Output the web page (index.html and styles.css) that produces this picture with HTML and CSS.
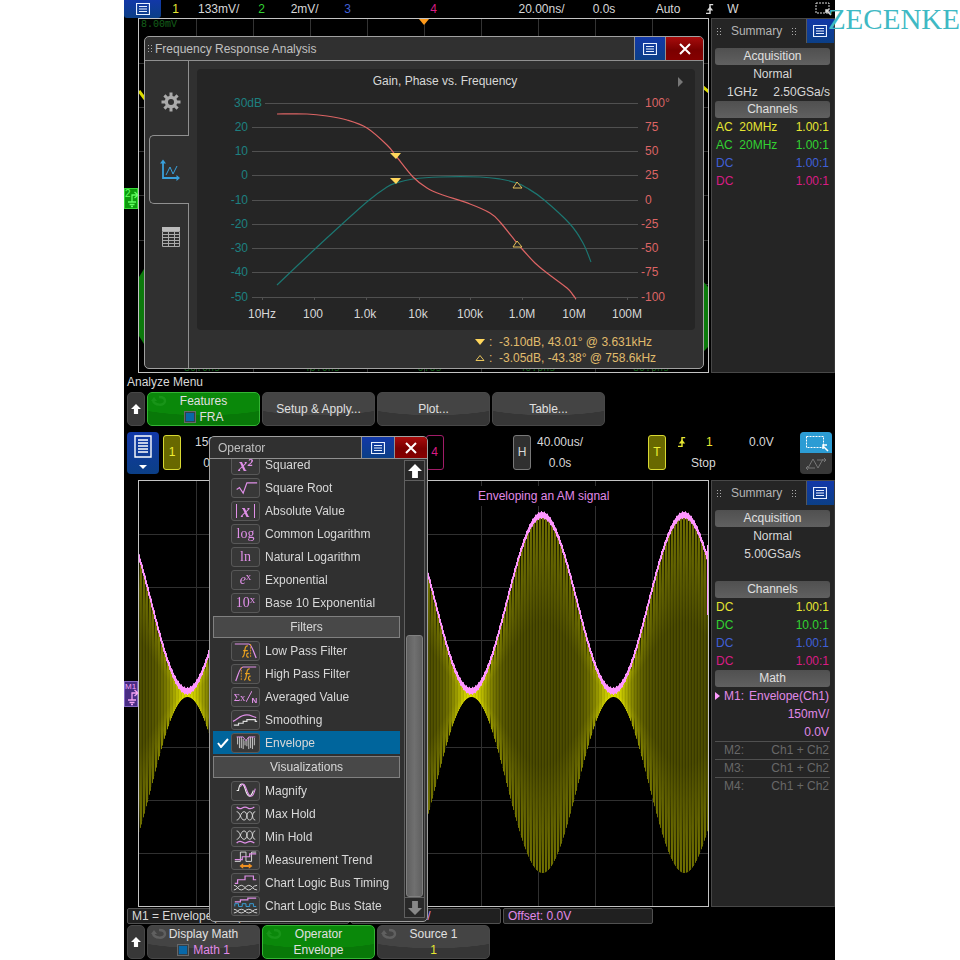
FILE: index.html
```html
<!DOCTYPE html>
<html lang="en">
<head>
<meta charset="utf-8">
<title>Oscilloscope</title>
<link rel="stylesheet" href="styles.css">
</head>
<body>
<svg class="defs" aria-hidden="true">
  <symbol id="i-list" viewBox="0 0 14 12"><path d="M.5.5h13v11H.5zM3 3.500h8M3 6h8M3 8.500h8" fill="none" stroke="currentColor" stroke-width="1.200"/></symbol>
  <symbol id="i-x" viewBox="0 0 12 12"><path d="M1 1l10 10M11 1L1 11" stroke="#fff" stroke-width="2"/></symbol>
  <symbol id="i-up" viewBox="0 0 12 12"><path d="M6 0l6 6H8.500v6h-5V6H0z" fill="currentColor"/></symbol>
  <symbol id="i-edge" viewBox="0 0 10 14"><path d="M0 12.500h5V1.500h4" fill="none" stroke="currentColor" stroke-width="1.800"/><path d="M1 9L5 4l4 5z" fill="currentColor"/></symbol>
  <symbol id="i-turn" viewBox="0 0 16 12"><path d="M2 5c1 6 12 6 12 1 0-3-3-4-6-4" fill="none" stroke="currentColor" stroke-width="2.500"/><path d="M0 6l3-4 3 4z" fill="currentColor"/></symbol>
  <symbol id="i-ground" viewBox="0 0 14 20"><path d="M7 14V7h5M9.500 4L13 7l-3.500 3M3 14h8M4.500 16.500h5M6 18.500h2" fill="none" stroke="currentColor" stroke-width="1.300"/></symbol>
</svg>
<main class="scope">

<section class="screen">
  <header class="topbar">
    <button class="blue menu-small" aria-label="Main menu"><svg width="14" height="12"><use href="#i-list"/></svg></button>
    <div class="quick c1"><b>1</b><span>133mV/</span></div>
    <div class="quick c2"><b>2</b><span>2mV/</span></div>
    <div class="quick c3"><b>3</b><span></span></div>
    <div class="quick c4"><b>4</b><span></span></div>
    <span class="t-scale">20.00ns/</span>
    <span class="t-delay">0.0s</span>
    <span class="t-mode">Auto</span>
    <svg class="t-edge" width="8" height="12"><use href="#i-edge"/></svg>
    <span class="t-src">W</span>
    <svg class="t-zoom" width="18" height="16" viewBox="0 0 18 16"><path d="M1 2h13v10H1z" fill="none" stroke="#ddd" stroke-dasharray="2 1"/><path d="M16 14l-5-5M11 12V9h3" fill="none" stroke="#ddd" stroke-width="1.500"/></svg>
  </header>

  <div class="work work-fra">
    <div class="stage">
      <div class="marker marker-2"><span>2</span><svg width="14" height="20"><use href="#i-ground"/></svg></div>
      <div class="plot">
        <svg class="grid" viewBox="0 0 569 353" preserveAspectRatio="none">
          <path d="M57.500 0v353M114.500 0v353M171.500 0v353M228.500 0v353M285.500 0v353M342.500 0v353M399.500 0v353M456.500 0v353M513.500 0v353M0 44.500h569M0 88.500h569M0 132.500h569M0 176.500h569M0 221.500h569M0 265.500h569M0 309.500h569" stroke="#333"/>
          <path d="M0 72l6 8M564 68l6 5" stroke="#dcdc00" stroke-width="3"/>
          <path d="M0 258l5-8v75l-5-8zM564 262l5 6v60l-5 5z" fill="#0c7a0c"/>
          <path d="M280 0h10l-5 6z" fill="#ff9a1a"/>
        </svg>
        <span class="scale-label">8.00mV</span>
        <div class="time-labels"><span>-80.0ns</span><span>-40.0ns</span><span>0.0s</span><span>40.0ns</span><span>80.0ns</span></div>
      </div>

      <section class="dialog fra" aria-label="Frequency Response Analysis">
        <header class="dialog-head">
          <i class="grip"></i><h2>Frequency Response Analysis</h2>
          <button class="blue" aria-label="Options"><svg width="14" height="12"><use href="#i-list"/></svg></button>
          <button class="red" aria-label="Close"><svg width="12" height="12"><use href="#i-x"/></svg></button>
        </header>
        <div class="fra-body">
          <nav class="tabs">
            <button class="tab tab-first" aria-label="Settings"><svg width="20" height="20" viewBox="-10 -10 20 20"><g stroke="#aaa" stroke-width="3"><path d="M0-9.500v19M-9.500 0h19"/><path d="M-6.600-6.600L6.600 6.600M6.600-6.600L-6.600 6.600"/></g><circle r="6.300" fill="#aaa"/><circle r="3" fill="#303030"/></svg></button>
            <button class="tab tab-on" aria-label="Chart"><svg width="20" height="22" viewBox="0 0 20 22"><path d="M3 3v16h15" fill="none" stroke="#39a0dc" stroke-width="1.800"/><path d="M0 4.500L3 .500l3 4zM16.500 16l3.500 3-3.500 3z" fill="#39a0dc"/><path d="M6 16l4-8 3 7 4-8" fill="none" stroke="#39a0dc"/></svg></button>
            <button class="tab" aria-label="Table"><svg width="18" height="20" viewBox="0 0 18 20"><path d="M0 0h18v4H0z" fill="#bbb"/><path d="M.5 4.500h17v15H.5zM.5 7.500h17M.5 10.500h17M.5 13.500h17M.5 16.500h17M6.500 4v15M12.500 4v15" fill="none" stroke="#aaa"/></svg></button>
            <i class="tab-rest"></i>
          </nav>
          <div class="fra-main">
            <figure class="card">
              <svg class="chart" viewBox="0 0 498 261" role="img" aria-label="Gain, Phase vs. Frequency">
                <path d="M68 34.500h373M55 58.500h386M55 82.500h386M55 106.500h386M55 131.500h386M55 155.500h386M55 179.500h386M55 203.500h386M55 228.500h386M65.500 228v3M117.500 228v3M169.500 228v3M222.500 228v3M273.500 228v3M325.500 228v3M378.500 228v3M430.500 228v3" stroke="#505050"/>
                <path id="gain" fill="none" stroke="#1c7671" stroke-width="1.200"/>
                <path id="phase" fill="none" stroke="#dc6464" stroke-width="1.200"/>
                <path d="M193 84h11l-5 6zM193 109h11l-5 6z" fill="#ffd65c"/>
                <path d="M316 119h9l-5-6zM316 178h9l-5-6z" fill="#252525" stroke="#e6c25a"/>
                <path d="M481 8l5 5-5 5z" fill="#777"/>
                <text class="title" x="248" y="16">Gain, Phase vs. Frequency</text>
                <g class="left"><text x="65" y="38">30dB</text><text x="51" y="62">20</text><text x="51" y="86">10</text><text x="51" y="110">0</text><text x="51" y="135">-10</text><text x="51" y="159">-20</text><text x="51" y="183">-30</text><text x="51" y="207">-40</text><text x="51" y="232">-50</text></g>
                <g class="right"><text x="448" y="38">100°</text><text x="448" y="62">75</text><text x="448" y="86">50</text><text x="448" y="110">25</text><text x="448" y="135">0</text><text x="444" y="159">-25</text><text x="444" y="183">-50</text><text x="444" y="207">-75</text><text x="444" y="232">-100</text></g>
                <g class="bottom"><text x="65" y="249">10Hz</text><text x="116" y="249">100</text><text x="168" y="249">1.0k</text><text x="221" y="249">10k</text><text x="273" y="249">100k</text><text x="325" y="249">1.0M</text><text x="377" y="249">10M</text><text x="430" y="249">100M</text></g>
              </svg>
            </figure>
            <ul class="readout">
              <li><svg width="10" height="6"><path d="M0 0h10l-5 6z" fill="#ffd65c"/></svg><i>:</i>-3.10dB, 43.01° @ 3.631kHz</li>
              <li><svg width="10" height="6"><path d="M1 5.500h8l-4-5z" fill="none" stroke="#e6c25a"/></svg><i>:</i>-3.05dB, -43.38° @ 758.6kHz</li>
            </ul>
          </div>
        </div>
      </section>
    </div>

    <aside class="summary">
      <header><i class="grip"></i><h2>Summary</h2><i class="grip"></i><button class="blue" aria-label="Summary options"><svg width="14" height="12"><use href="#i-list"/></svg></button></header>
      <div class="rows">
        <h3>Acquisition</h3>
        <p class="mid">Normal</p>
        <p class="rate"><span>1GHz</span><span>2.50GSa/s</span></p>
        <h3>Channels</h3>
        <p class="c1"><span>AC&nbsp; 20MHz</span><span>1.00:1</span></p>
        <p class="c2"><span>AC&nbsp; 20MHz</span><span>1.00:1</span></p>
        <p class="c3"><span>DC</span><span>1.00:1</span></p>
        <p class="c4"><span>DC</span><span>1.00:1</span></p>
      </div>
    </aside>
  </div>

  <h1 class="menu-name">Analyze Menu</h1>
  <div class="softkeys">
    <button class="back" aria-label="Back"><svg width="10" height="10"><use href="#i-up"/></svg></button>
    <button class="key green"><svg class="turn" width="16" height="12"><use href="#i-turn"/></svg><span>Features</span><span><i class="tick"></i>FRA</span></button>
    <button class="key">Setup &amp; Apply...</button>
    <button class="key">Plot...</button>
    <button class="key">Table...</button>
  </div>
</section>

<section class="screen screen-math">
  <header class="bigbar">
    <button class="blue menu-big" aria-label="Main menu"><svg width="20" height="36" viewBox="0 0 20 36"><path d="M2 1h16v21H2zM5 5h10M5 8h10M5 11h10M5 14h10M5 17h10" fill="none" stroke="#fff" stroke-width="1.400"/><path d="M6 30h8l-4 4z" fill="#fff"/></svg></button>
    <div class="block"><b class="box box-1">1</b><div class="vals vals-1"><span>150mV/</span><span>0.0V</span></div></div>
    <div class="block"></div>
    <div class="block"></div>
    <div class="block"><b class="box box-4">4</b></div>
    <div class="block"><b class="box">H</b><div class="vals vals-h"><span>40.00us/</span><span>0.0s</span></div></div>
    <div class="block"><b class="box box-t">T</b><div class="vals vals-t"><span class="trig"><svg class="c1" width="8" height="12"><use href="#i-edge"/></svg><b class="c1">1</b><span>0.0V</span></span><span>Stop</span></div></div>
    <button class="mode" aria-label="Drag mode">
      <span class="mode-on"><svg width="26" height="18" viewBox="0 0 26 18"><path d="M3.500 2.500h17v11h-17z" fill="none" stroke="#fff" stroke-dasharray="2 1"/><path d="M25 17l-5-5M20 15v-4h4" fill="none" stroke="#fff" stroke-width="1.500"/></svg></span>
      <span class="mode-off"><svg width="22" height="14" viewBox="0 0 22 14"><path d="M3 11l5-9 5 9 5-9M1 11h9M3 9l-2 2 2 2M12 3h9M19 1l2 2-2 2" fill="none" stroke="#777"/></svg></span>
    </button>
  </header>

  <div class="work work-math">
    <div class="stage">
      <div class="marker marker-m"><span>M1</span><svg width="14" height="20"><use href="#i-ground"/></svg></div>
      <div class="plot">
        <canvas id="wave" width="569" height="425"></canvas>
        <span class="note">Enveloping an AM signal</span>
      </div>
    </div>
    <aside class="summary">
      <header><i class="grip"></i><h2>Summary</h2><i class="grip"></i><button class="blue" aria-label="Summary options"><svg width="14" height="12"><use href="#i-list"/></svg></button></header>
      <div class="rows">
        <h3>Acquisition</h3>
        <p class="mid">Normal</p>
        <p class="mid">5.00GSa/s</p>
        <p></p>
        <h3>Channels</h3>
        <p class="c1"><span>DC</span><span>1.00:1</span></p>
        <p class="c2"><span>DC</span><span>10.0:1</span></p>
        <p class="c3"><span>DC</span><span>1.00:1</span></p>
        <p class="c4"><span>DC</span><span>1.00:1</span></p>
        <h3>Math</h3>
        <p class="math m1"><svg width="5" height="8"><path d="M0 0l5 4-5 4z" fill="#ff9cff"/></svg><span>M1:</span><span>Envelope(Ch1)</span></p>
        <p class="math"><span></span><span>150mV/</span></p>
        <p class="math"><span></span><span>0.0V</span></p>
        <p class="math off"><span>M2:</span><span>Ch1 + Ch2</span></p>
        <p class="math off"><span>M3:</span><span>Ch1 + Ch2</span></p>
        <p class="math off"><span>M4:</span><span>Ch1 + Ch2</span></p>
      </div>
    </aside>
  </div>

  <div class="status"><span>M1 = Envelope(Ch1)</span><span class="pink">Scale 150mV/</span><span class="pink">Offset: 0.0V</span></div>
  <div class="softkeys">
    <button class="back" aria-label="Back"><svg width="10" height="10"><use href="#i-up"/></svg></button>
    <button class="key"><svg class="turn" width="16" height="12"><use href="#i-turn"/></svg><span>Display Math</span><span class="pink"><i class="tick"></i>Math 1</span></button>
    <button class="key green"><svg class="turn" width="16" height="12"><use href="#i-turn"/></svg><span>Operator</span><span>Envelope</span></button>
    <button class="key"><svg class="turn" width="16" height="12"><use href="#i-turn"/></svg><span>Source 1</span><span class="c1">1</span></button>
  </div>

  <section class="dialog operator" aria-label="Operator">
    <header class="dialog-head">
      <h2>Operator</h2>
      <button class="blue" aria-label="Options"><svg width="14" height="12"><use href="#i-list"/></svg></button>
      <button class="red" aria-label="Close"><svg width="12" height="12"><use href="#i-x"/></svg></button>
    </header>
    <div class="op-body">
      <div class="op-list">
        <button class="op"><span class="ico it">x²</span>Squared</button>
        <button class="op"><span class="ico"><svg viewBox="0 0 29 21"><path d="M5 12l3-2 4 6 4-11h11" fill="none" stroke="#e090e8" stroke-width="1.300"/></svg></span>Square Root</button>
        <button class="op"><span class="ico it abs">x</span>Absolute Value</button>
        <button class="op"><span class="ico">log</span>Common Logarithm</button>
        <button class="op"><span class="ico">ln</span>Natural Logarithm</button>
        <button class="op"><span class="ico"><em>e</em><sup>x</sup></span>Exponential</button>
        <button class="op"><span class="ico">10<sup>x</sup></span>Base 10 Exponential</button>
        <h3>Filters</h3>
        <button class="op"><span class="ico"><svg viewBox="0 0 29 21"><path d="M3 3h15c3 0 5 8 8 15" fill="none" stroke="#e090e8" stroke-width="1.300"/><path d="M20 3v15" stroke="#d89020" stroke-dasharray="2 1"/><path d="M17 5c-5-1-2 12-6 12M12 10h5M18 13c-3-1-3 5 0 4" fill="none" stroke="#e8a020" stroke-width="1.300"/></svg></span>Low Pass Filter</button>
        <button class="op"><span class="ico"><svg viewBox="0 0 29 21"><path d="M4 18c3-7 4-15 8-15h14" fill="none" stroke="#e090e8" stroke-width="1.300"/><path d="M10 3v15" stroke="#d89020" stroke-dasharray="2 1"/><path d="M19 5c-5-1-2 12-6 12M14 10h5M20 13c-3-1-3 5 0 4" fill="none" stroke="#e8a020" stroke-width="1.300"/></svg></span>High Pass Filter</button>
        <button class="op"><span class="ico avg"><span>Σx</span><svg width="6" height="13" viewBox="0 0 6 13"><path d="M0 12L6 1" stroke="#e090e8"/></svg><sub>N</sub></span>Averaged Value</button>
        <button class="op"><span class="ico"><svg viewBox="0 0 29 21"><path d="M1 12c6-3 8-7 15-7 4 0 6 2 10 3" fill="none" stroke="#e090e8" stroke-width="1.300"/><path d="M2 16h5v-2h5v-2h4v-2h9v2h2" fill="none" stroke="#ddd" stroke-width="1.300"/></svg></span>Smoothing</button>
        <button class="op op-on"><svg class="check" width="12" height="10"><path d="M1 5l3 4 7-8" fill="none" stroke="#fff" stroke-width="2"/></svg><span class="ico"><svg viewBox="0 0 29 21"><path d="M6 4v8M8 4v12M10 4v12M12 6v11M14 8v5M16 7v7M18 4v13M20 4v12M22 4v13M24 5v8" stroke="#ccc"/><path d="M5 4h7l3 4 3-4h7" fill="none" stroke="#e090e8"/></svg></span>Envelope</button>
        <h3>Visualizations</h3>
        <button class="op"><span class="ico"><svg viewBox="0 0 29 21"><path d="M5 10h2c1-9 5-9 7-2s5 13 9 2" fill="none" stroke="#eee" stroke-width="1.200"/><path d="M9 6c3-6 5-2 7 4s6 11 9-2" fill="none" stroke="#e090e8" stroke-width="1.200"/></svg></span>Magnify</button>
        <button class="op"><span class="ico"><svg viewBox="0 0 29 21"><path d="M5 3q3 3 6 1t6 0 7-1" fill="none" stroke="#e090e8" stroke-width="1.300"/><path d="M5 8c4 0 4 9 8 9s2-9 6-9 2 9 6 9M5 17c4 0 4-9 8-9s2 9 6 9 2-9 6-9" fill="none" stroke="#ddd"/></svg></span>Max Hold</button>
        <button class="op"><span class="ico"><svg viewBox="0 0 29 21"><path d="M5 17q3-3 6-1t6 0 7 1" fill="none" stroke="#e090e8" stroke-width="1.300"/><path d="M5 4c4 0 4 9 8 9s2-9 6-9 2 9 6 9M5 13c4 0 4-9 8-9s2 9 6 9 2-9 6-9" fill="none" stroke="#ddd"/></svg></span>Min Hold</button>
        <button class="op"><span class="ico"><svg viewBox="0 0 29 21"><path d="M3 12h6V2h6v10h6V2h5" fill="none" stroke="#ddd"/><path d="M3 10h8V7h8V4h7" fill="none" stroke="#e090e8" stroke-width="1.300"/><path d="M10 17h10" stroke="#f09020" stroke-width="2"/><path d="M12 14v6l-4-3zM18 14v6l4-3z" fill="#f09020"/></svg></span>Measurement Trend</button>
        <button class="op"><span class="ico"><svg viewBox="0 0 29 21"><path d="M3 11h3V7h8V3h9v4h3" fill="none" stroke="#e090e8" stroke-width="1.300"/><path d="M2 13c4 0 4 5 8 5s4-5 8-5 4 5 9 5M2 18c4 0 4-5 8-5s4 5 8 5 4-5 9-5" fill="none" stroke="#ddd"/></svg></span>Chart Logic Bus Timing</button>
        <button class="op"><span class="ico"><svg viewBox="0 0 29 21"><path d="M3 6h6V4h8V2h9" fill="none" stroke="#e090e8" stroke-width="1.300"/><path d="M3 11V8h4v3h4V8h4v3h4V8h4v3h3" fill="none" stroke="#39a0dc"/><path d="M2 14c4 0 4 4 8 4s4-4 8-4 4 4 9 4M2 18c4 0 4-4 8-4s4 4 8 4 4-4 9-4" fill="none" stroke="#ddd"/></svg></span>Chart Logic Bus State</button>
      </div>
      <div class="scroll">
        <button aria-label="Scroll up"><svg width="14" height="14"><use href="#i-up"/></svg></button>
        <i class="track"></i><i class="thumb"></i>
        <button class="down" aria-label="Scroll down"><svg width="14" height="14"><use href="#i-up"/></svg></button>
      </div>
    </div>
  </section>
</section>
</main>
<div class="brand">ZECENKE</div>
<script src="script.js"></script>
</body>
</html>
```
FILE: styles.css
```css
* { box-sizing: border-box; }
body { margin: 0; background: #fff; color: #d8d8d8; font: 12px/16px "Liberation Sans", Arial, sans-serif; position: relative; overflow-x: hidden; }
h1, h2, h3, p, ul, figure { margin: 0; padding: 0; font-size: 12px; font-weight: normal; list-style: none; }
b, i { font-weight: normal; font-style: normal; }
button { margin: 0; padding: 0; border: 0; background: none; color: inherit; font: inherit; display: flex; align-items: center; justify-content: center; }
svg { display: block; flex: none; }
.defs { position: absolute; width: 0; height: 0; }
.scope { margin: 0 125px 0 124px; padding-bottom: 1px; background: #000; }
.brand { position: absolute; top: 2px; right: 0; color: #3fb9c4; font: 29px/34px "Liberation Serif", "Times New Roman", serif; }
.blue { background: linear-gradient(#1238a8, #0b3f86); color: #e8f0ff; }
.red { background: linear-gradient(#a80c0c, #7a0000 55%, #860000); }
.c1 { color: #e6e632; }
.c2 { color: #32d232; }
.c3 { color: #4060d8; }
.c4 { color: #d81c84; }
.pink { color: #e08ae8; }
.grip { width: 6px; height: 9px; background: radial-gradient(circle, #aaa 0 0.5px, transparent 1px) 0 0 / 3px 3px; }

/* first screen */
.topbar { display: flex; align-items: center; height: 18px; white-space: nowrap; }
.topbar > span { text-align: center; }
.menu-small { width: 37px; height: 18px; border-radius: 0 0 3px 3px; }
.quick { flex: 1; display: flex; max-width: 86px; }
.quick b { width: 30px; text-align: center; }
.quick span { width: 58px; text-align: center; color: #d8d8d8; }
.t-scale { width: 73px; }
.t-delay { width: 52px; }
.t-mode { width: 76px; }
.t-src { width: 38px; }
.t-zoom { margin-left: auto; margin-right: 2px; }
.work { display: grid; grid-template-columns: 1fr 125px; }
.work-fra { min-height: 355px; }
.work-math { min-height: 427px; }
.stage { position: relative; display: flex; padding: 0 1px 0 14px; }
.plot { position: relative; flex: 1; border: 1px solid #c4c4c4; overflow: hidden; }
.grid, canvas { position: absolute; inset: 0; width: 100%; height: 100%; }
.scale-label { position: absolute; top: 0; left: 2px; color: #14601a; font: 10px/12px "Liberation Mono", monospace; }
.time-labels { position: absolute; inset: auto 0 -2px; display: flex; justify-content: space-around; color: #14601a; font: 10px/10px "Liberation Mono", monospace; }
.marker { position: absolute; left: 0; width: 14px; font-size: 10px; line-height: 10px; }
.marker svg { position: absolute; left: 0; bottom: 0; }
.marker-2 { top: 170px; height: 21px; background: #0c9c0c; border: 1px solid #38dc38; color: #62ff62; }
.marker-m { top: 201px; height: 26px; background: #482c84; border: 1px solid #8468c4; color: #f4a4f4; font-size: 8px; }

.dialog { position: absolute; border: 1px solid #a0a0a0; border-radius: 5px; background: #303030; overflow: hidden; display: flex; flex-direction: column; }
.dialog-head { display: flex; align-items: center; height: 24px; border-bottom: 1px solid #909090; flex: none; }
.dialog-head h2 { flex: 1; color: #c0c0c0; }
.dialog-head button { width: 31px; height: 23px; border-left: 1px solid #909090; }
.dialog-head .red { width: 38px; }
.fra { top: 18px; bottom: 4px; left: 20px; right: 6px; }
.fra .grip { margin: 0 2px; }
.fra-body { display: flex; flex: 1; }
.tabs { width: 44px; display: grid; grid-template-rows: 74px 69px 66px 1fr; }
.tab { border-right: 1px solid #909090; padding-left: 8px; }
.tab-first { padding-top: 8px; }
.tab-on { margin-left: 4px; padding: 0; border: 1px solid #909090; border-right: 0; border-radius: 5px 0 0 5px; }
.tab-rest { border-right: 1px solid #909090; }
.fra-main { flex: 1; padding: 8px 8px 0; }
.card { background: #252525; border-radius: 4px; }
.chart { width: 100%; font-size: 12px; }
.chart .title, .chart .bottom { fill: #d8d8d8; text-anchor: middle; }
.chart .left { fill: #1d8080; text-anchor: end; }
.chart .right { fill: #dc6464; }
.readout { width: 184px; margin: 4px 36px 0 auto; color: #e0bc6c; white-space: nowrap; }
.readout li { display: flex; align-items: center; }
.readout i { width: 14px; padding-left: 4px; }

.summary { background: #252525; border: 1px solid #484848; border-right-color: #383838; margin-left: 1px; }
.summary header { display: flex; align-items: center; justify-content: space-between; height: 24px; padding-left: 4px; color: #b4b4b4; }
.summary header button { width: 28px; height: 24px; border-left: 1px solid #585858; }
.summary .rows { padding: 5px 4px 0 3px; }
.rows h3 { height: 17px; line-height: 17px; text-align: center; border-radius: 3px; background: linear-gradient(#505050, #606060); color: #e0e0e0; }
.rows p { display: flex; justify-content: space-between; height: 18px; line-height: 18px; padding: 0 1px; white-space: nowrap; }
.rows .mid { justify-content: center; }
.rows .rate { padding: 0 0 0 12px; }
.rows .math { color: #e08ae8; padding-left: 9px; }
.rows .m1 { padding-left: 0; align-items: center; gap: 4px; }
.m1 span:last-child { margin-left: auto; }
.rows .off { color: #686868; border-top: 1px solid #505050; line-height: 17px; }

.menu-name { padding: 1px 3px; line-height: 16px; color: #d8d8d8; }
.softkeys { display: grid; grid-template-columns: 18px repeat(6, 1fr); gap: 2px; padding: 1px 0 0 3px; }
.back, .key { height: 34px; border-radius: 5px; border: 1px solid #484848; background: radial-gradient(ellipse 80% 60% at 50% 10%, #444 98%, #363636); color: #e0e0e0; }
.back { color: #fff; background: #383838; }
.key { position: relative; flex-direction: column; line-height: 16px; white-space: nowrap; }
.key span { display: flex; align-items: center; }
.key.green { border-color: #34b434; background: radial-gradient(ellipse 80% 60% at 50% 10%, #0a880a 98%, #087808); }
.turn { position: absolute; left: 3px; top: 2px; color: #606060; }
.green .turn { color: #189418; }
.tick { width: 12px; height: 12px; margin-right: 4px; background: #0868a8; border: 2px solid #30404c; outline: 1px solid #686868; outline-offset: -1px; }

/* second screen */
.screen-math { position: relative; padding-top: 4px; }
.bigbar { display: grid; grid-template-columns: 36px repeat(4, 1fr) 135px 152px 35px; height: 50px; padding: 2px 0 0 3px; align-items: start; }
.menu-big { width: 32px; height: 42px; border-radius: 4px; }
.block { display: flex; padding-top: 3px; }
.box { width: 18px; height: 35px; line-height: 33px; text-align: center; border: 1px solid #787878; border-radius: 3px; background: #303030; }
.box-1, .box-t { background: #686800; border-color: #d8d832; color: #f0f032; }
.box-4 { background: #000; border-color: #a01c68; color: #d81c84; }
.vals { display: grid; grid-template-rows: 16px 16px; row-gap: 5px; justify-items: center; margin-top: -1px; }
.vals-1 { margin-left: 14px; }
.vals-h { margin-left: 6px; }
.vals-t { justify-items: start; }
.trig { display: grid; grid-template-columns: 28px 43px auto; align-items: center; margin-left: 12px; }
.vals-t > span:last-child { margin-left: 25px; }
.mode { flex-direction: column; width: 32px; height: 42px; border-radius: 4px; background: #383838; overflow: hidden; }
.mode span { display: flex; align-items: center; justify-content: center; width: 32px; height: 21px; }
.mode .mode-on { background: #2c9cd4; }
.note { position: absolute; top: 5px; left: 338px; padding: 1px; background: #000; color: #e08ae8; line-height: 18px; }
.status { display: grid; grid-template-columns: 222px 150px 150px; gap: 2px; padding: 1px 0 0 3px; }
.status span { height: 16px; line-height: 14px; padding-left: 4px; border: 1px solid #505050; border-radius: 2px; background: #202020; }

.operator { top: 10px; left: 85px; width: 219px; height: 486px; }
.operator .dialog-head { height: 22px; padding-left: 8px; }
.operator .dialog-head button { width: 33px; height: 21px; }
.op-body { display: flex; flex: 1; min-height: 0; overflow: hidden; }
.op-list { flex: 1; margin: -6px 4px 0 3px; }
.op { position: relative; width: 100%; height: 23px; padding-left: 18px; justify-content: flex-start; gap: 5px; white-space: nowrap; }
.op-on { background: #00659c; }
.check { position: absolute; left: 4px; top: 7px; }
.op-list h3 { height: 22px; line-height: 20px; margin: 2px 0 1px; text-align: center; border: 1px solid #808080; background: #484848; }
.ico { width: 29px; height: 20px; display: flex; align-items: center; justify-content: center; border: 1px solid #585858; border-radius: 3px; background: #383838; color: #e090e8; font: 14px/16px "Liberation Serif", serif; }
.ico > svg { width: 27px; height: 20px; }
.ico sup { font-size: 11px; line-height: 8px; margin-top: -8px; }
.ico.it { font-size: 18px; font-style: italic; font-weight: bold; }
.abs::before, .abs::after { content: ""; width: 1px; height: 14px; background: #e090e8; margin: 0 4px; }
.ico.avg { font-size: 11px; }
.avg > svg { width: 6px; height: 13px; }
.avg sub { font: bold 8px/8px "Liberation Sans", sans-serif; margin-top: 8px; }
.scroll { width: 21px; margin: 1px 2px 3px 0; border: 1px solid #606060; background: #282828; display: flex; flex-direction: column; align-items: center; }
.scroll button { width: 19px; height: 20px; border-bottom: 1px solid #606060; color: #fff; }
.track { flex: 155; }
.thumb { flex: 262; width: 17px; border-radius: 3px; background: linear-gradient(90deg, #606060, #707070, #606060); border: 1px solid #808080; }
.scroll .down { color: #888; border: 0; border-top: 1px solid #606060; }
.down svg { transform: rotate(180deg); }
```
FILE: script.js
```js
// Chart curves, in the coordinates of the chart's viewBox.
const gain = [[80,216],[118,180],[143,157],[171,132],[190,118],[199,114],[216,110],[243,108],[283,108],[303,110],[320,114],[330,119],[346,130],[373,155],[386,174],[394,193]];
const phase = [[80,45],[110,45],[130,47],[150,51],[170,59],[190,76],[199,87],[216,108],[230,119],[243,125],[273,135],[293,144],[303,153],[320,174],[326,181],[338,194],[350,204],[370,219],[376,226],[379,230]];

function spline(points) {
  let d = "M" + points[0];
  for (let i = 0; i < points.length - 1; i++) {
    const p0 = points[i - 1] || points[i], p1 = points[i], p2 = points[i + 1], p3 = points[i + 2] || p2;
    const a = [p1[0] + (p2[0] - p0[0]) / 6, p1[1] + (p2[1] - p0[1]) / 6];
    const b = [p2[0] - (p3[0] - p1[0]) / 6, p2[1] - (p3[1] - p1[1]) / 6];
    d += "C" + a + " " + b + " " + p2;
  }
  return d;
}
document.getElementById("gain").setAttribute("d", spline(gain));
document.getElementById("phase").setAttribute("d", spline(phase));

// AM signal with its envelope.
const canvas = document.getElementById("wave");
const g = canvas.getContext("2d");
const W = canvas.width, H = canvas.height, MID = 212;
g.fillStyle = "#303030";
for (let k = 1; k < 10; k++) g.fillRect(57 * k, 0, 1, H);
for (let k = 1; k < 8; k++) g.fillRect(0, Math.round(H * k / 8), W, 1);

const swing = x => 1 + Math.cos((x - 403) * 2 * Math.PI / 142);
for (let x = 0; x < W; x++) {
  const s = swing(x);
  const top = MID - 2 - 88 * s, bottom = MID + 4 + 88 * s, h = bottom - top;
  const glow = Math.exp(-s * 2.6);
  const stripe = x % 3 === 0 ? -14 : x % 3 === 1 ? 6 : 0;
  const tone = v => { const n = Math.round(v + stripe); return "rgb(" + n + "," + n + ",0)"; };
  const fill = g.createLinearGradient(0, top, 0, bottom);
  const core = 70 + 145 * glow, edge = 108 + 115 * glow;
  fill.addColorStop(0, tone(edge));
  fill.addColorStop(0.3, tone(core));
  fill.addColorStop(0.7, tone(core));
  fill.addColorStop(1, tone(edge));
  g.fillStyle = fill;
  g.fillRect(x, top, 1, h);
  if (x % 3 === 0 && s > 0.3) {
    const depth = x % 2 ? 0.2 : 0.12;
    const gap = g.createLinearGradient(0, top, 0, bottom);
    gap.addColorStop(0, "rgba(0,0,0,.85)");
    gap.addColorStop(depth, "rgba(0,0,0,0)");
    gap.addColorStop(1 - depth, "rgba(0,0,0,0)");
    gap.addColorStop(1, "rgba(0,0,0,.85)");
    g.fillStyle = gap;
    g.fillRect(x, top, 1, h);
  }
}
g.fillStyle = "#ff96ff";
for (let x = 0; x < W; x++) {
  const y = MID - 2 - 88 * swing(x), next = MID - 2 - 88 * swing(x + 1);
  const pad = 3 + (x * 7 % 3 === 0 ? 1 : 0) - Math.min(1.5, Math.abs(next - y) / 2);
  g.fillRect(x, Math.min(y, next) - pad, 1, Math.abs(next - y) + pad * 2);
}
g.fillRect(W - 1, 64, 1, 70);
```
